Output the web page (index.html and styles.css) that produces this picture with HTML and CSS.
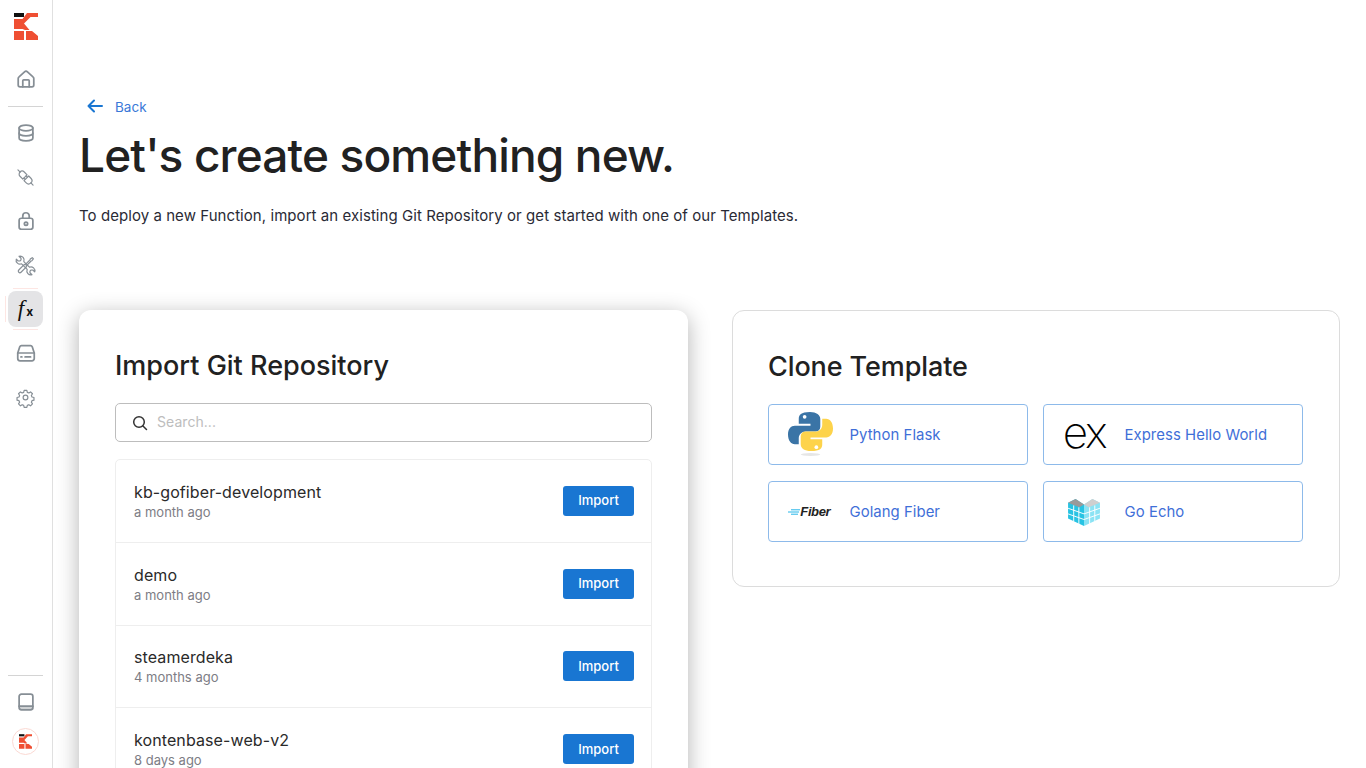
FILE: index.html
```html
<!DOCTYPE html>
<html lang="en">
<head>
<meta charset="utf-8">
<title>Create Function</title>
<link rel="stylesheet" href="styles.css">
</head>
<body>
<div class="app">
  <nav class="sidebar">
    <svg class="logo" viewBox="0 0 24 27"><rect x="0" y="0" width="10" height="4" fill="#111"/><path d="M13 0H24V4H16.500L10 10.500 15.500 17H11L8.500 16H0V6H8.500Z" fill="#ef4f33"/><path d="M0 18h10v9H0zM12 18h6l6 5v4H12z" fill="#ef4f33"/></svg>
    <a class="nav-item"><svg viewBox="0 0 24 24" class="ico"><path d="M3.500 11.500c0-.8.300-1.400.9-1.900l6-5.400a2.400 2.400 0 0 1 3.200 0l6 5.400c.6.500.9 1.100.9 1.900v7a2 2 0 0 1-2 2H5.500a2 2 0 0 1-2-2z"/><path d="M8.500 20.500V14a1 1 0 0 1 1-1h5a1 1 0 0 1 1 1v6.500"/></svg></a>
    <hr class="rule rule-mid">
    <a class="nav-item"><svg viewBox="0 0 24 24" class="ico"><ellipse cx="12" cy="6.500" rx="7.500" ry="3.200"/><path d="M4.500 6.500v11c0 1.800 3.400 3.200 7.500 3.200s7.500-1.400 7.500-3.200v-11"/><path d="M4.500 12c0 1.800 3.400 3.200 7.500 3.200s7.500-1.400 7.500-3.200"/></svg></a>
    <a class="nav-item"><svg viewBox="0 0 24 24" class="ico thin"><g transform="rotate(45 12 12)"><path d="M-1.500 12H2.500"/><path d="M6 8.200H11V15.800H6A3.800 3.800 0 0 1 6 8.200Z"/><path d="M11 10H13M11 14H13"/><path d="M13.500 7.800H17.500A4.200 4.200 0 0 1 17.500 16.200H13.500Z"/><path d="M21.700 12H25.500"/></g></svg></a>
    <a class="nav-item"><svg viewBox="0 0 24 24" class="ico"><rect x="4.500" y="9" width="15" height="12" rx="2.500"/><path d="M8.500 9V6.500a3.500 3.500 0 0 1 7 0V9"/><circle cx="12" cy="15" r="1.800"/></svg></a>
    <a class="nav-item"><svg viewBox="0 0 24 24" class="ico thin"><g transform="rotate(-45 12 12)"><path d="M9.500 -2V1.500L11 3H13L14.500 1.500V-2A5 5 0 0 1 14 7V17A5 5 0 0 1 14.500 26V22.500L13 21H11L9.500 22.500V26A5 5 0 0 1 10 17V7A5 5 0 0 1 9.500 -2Z"/></g><g transform="rotate(45 12 12)"><path d="M11 -1h2l.5 3-.5 1v9h1v10a2 2 0 0 1-4 0V12h1V3l-.5-1z"/></g></svg></a>
    <a class="nav-item active"><span class="fx"><i>f</i><b>x</b></span></a>
    <a class="nav-item"><svg viewBox="0 0 24 24" class="ico"><path d="M7 4h10c.8 0 1.500.5 1.800 1.200L21 12v6a2.500 2.500 0 0 1-2.500 2.500h-13A2.500 2.500 0 0 1 3 18v-6l2.200-6.800C5.500 4.500 6.200 4 7 4z"/><path d="M3 12h18"/><path d="M6.500 16.300h1M11 16.300h6"/></svg></a>
    <a class="nav-item"><svg viewBox="0 0 24 24" class="ico thin"><circle cx="12" cy="12" r="3"/><path d="M10.300 3h3.400l.6 2.500 1.900.8 2.200-1.400 2.400 2.400-1.400 2.200.8 1.900 2.500.6v3.400l-2.500.6-.8 1.900 1.400 2.200-2.400 2.400-2.200-1.400-1.900.8-.6 2.500h-3.400l-.6-2.500-1.900-.8-2.200 1.400-2.400-2.400 1.400-2.200-.8-1.900-2.500-.6v-3.400l2.500-.6.8-1.900-1.400-2.200 2.400-2.400 2.200 1.400 1.900-.8z"/></svg></a>
    <div class="sidebar-foot">
      <hr class="rule">
      <a class="nav-item"><svg viewBox="0 0 24 24" class="ico"><path class="book-band" d="M5 16.500h15v4H5z"/><path d="M4.500 6a2.500 2.500 0 0 1 2.500-2.500h10A2.500 2.500 0 0 1 19.500 6v12a2.500 2.500 0 0 1-2.500 2.500H7A2.500 2.500 0 0 1 4.500 18z"/><path d="M4.500 16.500h15"/></svg></a>
      <span class="avatar"><svg viewBox="0 0 24 27"><rect x="0" y="0" width="10" height="4" fill="#111"/><path d="M13 0H24V4H16.500L10 10.500 15.500 17H11L8.500 16H0V6H8.500Z" fill="#ef4f33"/><path d="M0 18h10v9H0zM12 18h6l6 5v4H12z" fill="#ef4f33"/></svg></span>
    </div>
  </nav>
  <main class="main">
    <a class="back"><svg viewBox="0 0 16 14" class="back-arrow"><path d="M15 7H1.500M7 1.500 1.500 7 7 12.500"/></svg><span class="back-label">Back</span></a>
    <h1 class="title">Let's create something new.</h1>
    <p class="lead">To deploy a new Function, import an existing Git Repository or get started with one of our Templates.</p>
    <div class="columns">
      <section class="card card-import">
        <h2 class="card-title">Import Git Repository</h2>
        <label class="search"><svg viewBox="0 0 16 16" class="search-ico"><circle cx="7" cy="7" r="5.300"/><path d="m11 11 3.500 3.500"/></svg><input type="text" placeholder="Search..."></label>
        <ul class="repos">
          <li class="repo"><div><div class="repo-name">kb-gofiber-development</div><div class="repo-time">a month ago</div></div><button class="import">Import</button></li>
          <li class="repo"><div><div class="repo-name">demo</div><div class="repo-time">a month ago</div></div><button class="import">Import</button></li>
          <li class="repo"><div><div class="repo-name">steamerdeka</div><div class="repo-time">4 months ago</div></div><button class="import">Import</button></li>
          <li class="repo"><div><div class="repo-name">kontenbase-web-v2</div><div class="repo-time">8 days ago</div></div><button class="import">Import</button></li>
        </ul>
      </section>
      <section class="card card-clone">
        <h2 class="card-title">Clone Template</h2>
        <div class="templates">
          <a class="tpl"><span class="tpl-logo"><svg viewBox="0 0 46 46" width="45" height="45" class="py"><path d="M22.500 1C13 1 11 4 11 8v5h12v2H7c-4 0-7 3-7 9s3 10 7 10h4v-6c0-4 3-7 7-7h10c3 0 5-2 5-5V8c0-4-4-7-10.500-7z" fill="#3a74a6"/><path d="M23.500 45c9.500 0 11.500-3 11.500-7v-5H23v-2h16c4 0 7-3 7-9s-3-10-7-10h-4v6c0 4-3 7-7 7H18c-3 0-5 2-5 5v8c0 4 4 7 10.500 7z" transform="translate(0 -4)" fill="#fdd34b"/><circle cx="17" cy="6" r="1.900" fill="#fff"/><circle cx="29" cy="37" r="1.900" fill="#fff"/><ellipse cx="23" cy="44.500" rx="10" ry="1.500" fill="#e6e6e6"/></svg></span><span class="tpl-name">Python Flask</span></a>
          <a class="tpl"><span class="tpl-logo"><span class="ex">ex</span></span><span class="tpl-name">Express Hello World</span></a>
          <a class="tpl"><span class="tpl-logo"><span class="fiber"><svg viewBox="0 0 12 6" width="12" height="6"><path d="M3 .8h9M0 3h11M3 5.200h7" stroke="#27b6e8" stroke-width="1"/></svg><span>Fiber</span></span></span><span class="tpl-name">Golang Fiber</span></a>
          <a class="tpl"><span class="tpl-logo"><svg viewBox="0 0 36 32" width="34" height="30"><path d="M1 6 9 2l9 6-0 23-17-8z" fill="#27c3e3"/><path d="M18 8l9-6 8 4v17l-17 8z" fill="#8be3f4"/><path d="M1 6 9 2l9 6-5 3z" fill="#9a9a9a"/><path d="M18 8l9-6 8 4-12 5z" fill="#cfcfcf"/><path d="M7 9v17M12.500 11v18M1 12l17 6M1 18l17 6M24 11v18M29.500 9v17M18 18l17-6M18 24l17-6" stroke="#fff" stroke-width="1" fill="none"/></svg></span><span class="tpl-name">Go Echo</span></a>
        </div>
      </section>
    </div>
  </main>
</div>
</body>
</html>
```
FILE: styles.css
```css
* { box-sizing: border-box; }
html, body { margin: 0; height: 100%; }
body { font-family: Inter, "Open Sans", sans-serif; color: #212121; background: #fff; overflow: hidden; }
.app { display: flex; height: 100vh; overflow: hidden; }
.sidebar { width: 53px; flex: none; border-right: 1px solid #e0e0e0; display: flex; flex-direction: column; align-items: center; padding-top: 13px; padding-right: 1px; }
.logo { width: 24px; height: 27px; margin-bottom: 21px; }
.nav-item { position: relative; width: 35px; height: 36px; margin-bottom: 8px; border-radius: 8px; display: flex; align-items: center; justify-content: center; }
.nav-item.active { background: #e4e4e6; }
.nav-item.active::before { content: ""; position: absolute; inset: -3px; background:
  linear-gradient(#fde6e3, #fde6e3) center top / 25px 1px no-repeat,
  linear-gradient(#fde6e3, #fde6e3) center bottom / 25px 1px no-repeat,
  linear-gradient(#fde6e3, #fde6e3) left center / 1px 26px no-repeat; }
.ico { width: 22px; height: 22px; fill: none; stroke: #868e95; stroke-width: 1.900; stroke-linejoin: round; stroke-linecap: round; overflow: visible; }
.ico.thin { width: 19px; height: 19px; stroke-width: 1.500; }
.book-band { fill: #cfd2d4; stroke: none; }
.rule { width: 35px; border: 0; border-top: 1px solid #d4d4d4; margin: 0; flex: none; }
.rule-mid { margin: 1px 0 8px; }
.fx { font-family: "Liberation Serif", serif; color: #111; display: flex; align-items: baseline; }
.fx i { font-size: 23px; font-style: italic; font-weight: 400; line-height: 26px; }
.fx b { font-family: Inter, sans-serif; font-size: 12px; font-weight: 700; margin-left: 2px; }
.sidebar-foot { margin-top: auto; display: flex; flex-direction: column; align-items: center; padding-bottom: 13px; }
.sidebar-foot .nav-item { margin: 8px 0; }
.avatar { width: 27px; height: 27px; border-radius: 50%; border: 1px solid #fbd9d3; display: flex; align-items: center; justify-content: center; }
.avatar svg { width: 13px; height: 15px; }
.main { flex: 1; min-width: 0; padding: 97px 26px 0 27px; }
.back { display: flex; align-items: center; gap: 11px; height: 18px; color: #3a78d8; font-size: 13.500px; margin-left: 8px; }
.back-label { position: relative; top: 1px; }
.back-arrow { width: 16px; height: 14px; fill: none; stroke: #1976d2; stroke-width: 2; stroke-linecap: round; stroke-linejoin: round; position: relative; left: -1px; }
.title { font-size: 46px; line-height: 56px; font-weight: 500; letter-spacing: -.85px; margin: 12px 0 0 -1px; color: #212121; }
.lead { font-size: 15px; line-height: 22px; margin: 22px 0 0 -1px; letter-spacing: .06px; color: #2a2a35; }
.columns { display: grid; grid-template-columns: 609px 608px; gap: 44px; align-items: start; margin: 83px 0 0 -1px; }
.card { border-radius: 12px; background: #fff; }
.card-import { padding: 36px 36px 0; box-shadow: 0 5px 22px rgba(0,0,0,.3); }
.card-clone { padding: 36px 35px 44px; border: 1px solid #dcdcdc; height: 277px; }
.card-title { margin: 0; font-size: 27px; line-height: 39px; font-weight: 500; color: #212121; letter-spacing: -.1px; }
.card-import .card-title { letter-spacing: 0; }
.search { margin-top: 18px; height: 39px; border: 1px solid #bdbdbd; border-radius: 5px; display: flex; align-items: center; padding: 0 16px; gap: 9px; }
.search-ico { width: 16px; height: 16px; fill: none; stroke: #333; stroke-width: 1.500; stroke-linecap: round; flex: none; }
.search input { flex: 1; border: 0; outline: 0; font: inherit; font-size: 14px; color: #333; background: none; padding: 0 0 2px; letter-spacing: .05px; }
.search input::placeholder { color: #bdbdbd; opacity: 1; }
.repos { list-style: none; margin: 17px 0 0; padding: 0; border: 1px solid #eeeeee; border-radius: 5px; }
.repo { height: 82.750px; padding: 0 17px 0 18px; display: flex; align-items: center; justify-content: space-between; border-bottom: 1px solid #eeeeee; }
.repo-name { font-size: 16px; line-height: 22px; color: #2a2a2a; padding-bottom: 1px; letter-spacing: .1px; }
.repo-time { font-size: 13px; line-height: 17px; color: #7d7d85; }
.import { width: 71px; height: 30px; border: 0; border-radius: 3px; background: #1976d2; color: #fff; font: inherit; font-size: 13px; font-weight: 500; padding: 0 0 1px; }
.templates { margin-top: 18px; display: grid; grid-template-columns: 260px 260px; gap: 16px 15px; }
.tpl { height: 61px; border: 1px solid #8dbaea; border-radius: 4px; display: flex; align-items: center; }
.tpl-logo { width: 80.500px; flex: none; display: flex; align-items: center; justify-content: center; }
.tpl-name { font-size: 14.900px; letter-spacing: .05px; color: #3f6fd8; }
.py { position: relative; left: 1px; top: -1px; }
.ex { font-family: Inter, sans-serif; font-size: 44px; line-height: 40px; font-weight: 200; color: #000; letter-spacing: -2px; position: relative; top: -3px; }
.fiber { display: flex; align-items: center; font-family: "Liberation Sans", sans-serif; font-style: italic; font-weight: 700; font-size: 13px; color: #222; letter-spacing: -.4px; }
```
